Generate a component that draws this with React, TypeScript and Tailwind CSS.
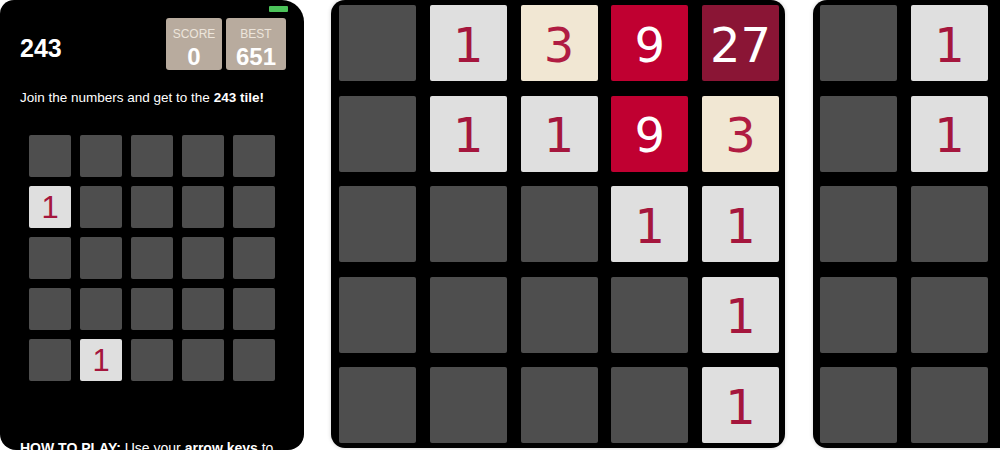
import React from "react";

type Tile = number | null;

const smallBoard: Tile[][] = [
	[null, null, null, null, null],
	[1, null, null, null, null],
	[null, null, null, null, null],
	[null, null, null, null, null],
	[null, 1, null, null, null],
];

const bigBoard: Tile[][] = [
	[null, 1, 3, 9, 27],
	[null, 1, 1, 9, 3],
	[null, null, null, 1, 1],
	[null, null, null, null, 1],
	[null, null, null, null, 1],
];

const sideBoard: Tile[][] = [
	[null, 1],
	[null, 1],
	[null, null],
	[null, null],
	[null, null],
];

function tileStyle(v: Tile) {
	if (v === null) return "bg-[#4e4e4e]";
	if (v === 1) return "bg-[#dfdfdf] text-[#a5163d]";
	if (v === 3) return "bg-[#f1e7d3] text-[#b01c42]";
	if (v === 9) return "bg-[#c00031] text-white";
	return "bg-[#8a1535] text-white";
}

function BigTile({ v }: { v: Tile }) {
	return (
		<div
			className={`flex h-[76px] w-[77px] items-center justify-center rounded-[2px] pt-[3px] text-[48px] leading-none ${tileStyle(v)}`}
			style={{ fontFamily: '"DejaVu Sans", sans-serif' }}
		>
			{v ?? ""}
		</div>
	);
}

function PhoneScreen() {
	return (
		<div className="relative flex h-[450px] w-[304px] shrink-0 flex-col rounded-b-[16px] rounded-tl-[14px] rounded-tr-[22px] bg-black font-['Liberation_Sans',Arial,sans-serif] text-white">
			{/* battery */}
			<div className="absolute right-[16px] top-[6px] h-[6px] w-[19px] rounded-[1px] bg-[#4cc35a]" />

			<div className="flex items-start justify-between pl-[20px] pr-[18px] pt-[18px]">
				<div className="mt-[18px] text-[25px] font-bold leading-none">243</div>
				<div className="flex gap-[4px]">
					<div className="flex h-[52px] w-[56px] flex-col items-center rounded-[3px] bg-[#b8ab9e] pt-[10px]">
						<span className="text-[12px] leading-none text-[#ede5db]">SCORE</span>
						<span className="mt-[5px] text-[24px] font-bold leading-none">0</span>
					</div>
					<div className="flex h-[52px] w-[60px] flex-col items-center rounded-[3px] bg-[#b8ab9e] pt-[10px]">
						<span className="text-[12px] leading-none text-[#ede5db]">BEST</span>
						<span className="mt-[5px] text-[24px] font-bold leading-none">651</span>
					</div>
				</div>
			</div>

			<p className="mt-[21px] pl-[20px] text-[13.5px] leading-none">
				Join the numbers and get to the <b>243 tile!</b>
			</p>

			<div className="ml-[29px] mt-[30px] grid grid-cols-[repeat(5,42px)] gap-[9px]">
				{smallBoard.flat().map((v, i) => (
					<div
						key={i}
						className={`flex h-[42px] w-[42px] items-center justify-center rounded-[2px] pt-[2px] text-[31px] leading-none ${tileStyle(v)}`}
					>
						{v ?? ""}
					</div>
				))}
			</div>

			<p className="mt-[60px] pl-[20px] text-[14px] leading-none">
				<b>HOW TO PLAY:</b> Use your <b>arrow keys</b> to
			</p>
		</div>
	);
}

export default function App() {
	return (
		<div className="flex h-[450px] w-[1000px] overflow-hidden bg-white">
			<PhoneScreen />

			<div className="ml-[27px] h-[448px] w-[454px] shrink-0 rounded-[14px] bg-black pl-[8px] pt-[5px] shadow-[0_0_4px_rgba(0,0,0,0.18)]">
				<div className="grid grid-cols-[repeat(5,77px)] gap-x-[13.75px] gap-y-[14.5px]">
					{bigBoard.flat().map((v, i) => (
						<BigTile key={i} v={v} />
					))}
				</div>
			</div>

			<div className="ml-[28px] h-[448px] w-[200px] shrink-0 rounded-[14px] bg-black pl-[7px] pt-[5px] shadow-[0_0_4px_rgba(0,0,0,0.18)]">
				<div className="grid grid-cols-[repeat(2,77px)] gap-x-[14px] gap-y-[14.5px]">
					{sideBoard.flat().map((v, i) => (
						<BigTile key={i} v={v} />
					))}
				</div>
			</div>
		</div>
	);
}
